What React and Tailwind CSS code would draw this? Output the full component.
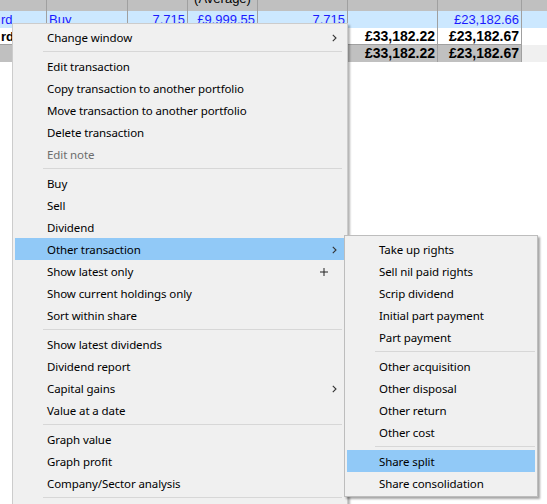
import React from "react";

const Chevron = () => (
  <svg width="5" height="8" viewBox="0 0 5 8" className="absolute right-[8px] top-[8px]">
    <path d="M0.8 0.8 L4 4 L0.8 7.2" fill="none" stroke="#333" strokeWidth="1.1" />
  </svg>
);

const Plus = () => (
  <svg width="8" height="8" viewBox="0 0 8 8" className="absolute right-[17px] top-[8px]">
    <path d="M4 0 V8 M0 4 H8" fill="none" stroke="#222" strokeWidth="1" />
  </svg>
);

function Item({ label, hl, disabled, sub, plus }) {
  return (
    <div
      className={
        "relative h-[22px] flex items-center pl-[32px] pt-[1px] whitespace-nowrap " +
        (hl ? "bg-[#91c9f7] " : "") +
        (disabled ? "text-[#6d6d6d]" : "text-black")
      }
    >
      {label}
      {sub && <Chevron />}
      {plus && <Plus />}
    </div>
  );
}

const Sep = ({ right }) => (
  <div className="h-[7px] flex items-center">
    <div className={"h-px bg-[#d7d7d7] ml-[28px] flex-1 " + (right ? "mr-[3px]" : "mr-0")} />
  </div>
);

export default function App() {
  const font = { fontFamily: '"Noto Sans", "Open Sans", sans-serif' };
  return (
    <div className="relative w-[547px] h-[504px] overflow-hidden bg-white" style={{ fontFamily: '"Liberation Sans", Arial, sans-serif' }}>
      {/* Background table */}
      <div className="flex flex-col text-[13px] leading-[17px]">
        {/* header */}
        <div className="flex h-[11px] bg-[#c0c0c0] overflow-hidden text-black">
          <div className="w-[47px] border-r border-[#a0a0a0]" />
          <div className="w-[81px] border-r border-[#a0a0a0]" />
          <div className="w-[60px] border-r border-[#a0a0a0]" />
          <div className="w-[70px] border-r border-[#a0a0a0] flex justify-center">
            <div className="-mt-[10px] leading-[17px]">(Average)</div>
          </div>
          <div className="w-[90px] border-r border-[#a0a0a0]" />
          <div className="w-[90px] border-r border-[#a0a0a0]" />
          <div className="w-[84px] border-r border-[#a0a0a0]" />
          <div className="flex-1" />
        </div>
        {/* selected row */}
        <div className="flex h-[17px] bg-[#cce8ff] text-[#1a1aff]">
          <div className="w-[47px] border-r border-[#a0a0a0] pl-[1px]">rd</div>
          <div className="w-[81px] border-r border-[#a0a0a0] pl-[2px]">Buy</div>
          <div className="w-[60px] border-r border-[#a0a0a0] text-right pr-[2px]">7,715</div>
          <div className="w-[70px] border-r border-[#a0a0a0] text-right pr-[2px]">£9,999.55</div>
          <div className="w-[90px] border-r border-[#a0a0a0] text-right pr-[2px]">7,715</div>
          <div className="w-[90px] border-r border-[#a0a0a0]" />
          <div className="w-[84px] border-r border-[#a0a0a0] text-right pr-[2px]">£23,182.66</div>
          <div className="flex-1" />
        </div>
        {/* total row white */}
        <div className="flex h-[17px] bg-white text-black font-bold">
          <div className="w-[47px] border-r border-b border-[#a0a0a0] pl-[1px]">rd</div>
          <div className="w-[81px] border-r border-b border-[#a0a0a0]" />
          <div className="w-[60px] border-r border-b border-[#a0a0a0]" />
          <div className="w-[70px] border-r border-b border-[#a0a0a0]" />
          <div className="w-[90px] border-r border-b border-[#a0a0a0]" />
          <div className="w-[90px] border-r border-b border-[#a0a0a0] text-right pr-[2px] text-[14px] leading-[16px]">£33,182.22</div>
          <div className="w-[84px] border-r border-b border-[#a0a0a0] text-right pr-[2px] text-[14px] leading-[16px]">£23,182.67</div>
          <div className="flex-1" />
        </div>
        {/* grand total gray */}
        <div className="flex h-[17px] bg-[#c0c0c0] text-black font-bold">
          <div className="w-[47px] border-r border-[#a0a0a0]" />
          <div className="w-[81px] border-r border-[#a0a0a0]" />
          <div className="w-[60px] border-r border-[#a0a0a0]" />
          <div className="w-[70px] border-r border-[#a0a0a0]" />
          <div className="w-[90px] border-r border-[#a0a0a0]" />
          <div className="w-[90px] border-r border-[#a0a0a0] text-right pr-[2px] text-[14px] leading-[17px]">£33,182.22</div>
          <div className="w-[84px] border-r border-[#a0a0a0] text-right pr-[2px] text-[14px] leading-[17px]">£23,182.67</div>
          <div className="flex-1 bg-[#f0f0f0]" />
        </div>
      </div>

      {/* Main context menu */}
      <div
        className="absolute left-[12px] top-[23px] w-[336px] bg-[#f0f0f0] border border-[#cccccc] shadow-[2px_2px_2px_rgba(0,0,0,0.3)] p-[2px] text-[11.5px] tracking-[-0.1px]"
        style={font}
      >
        <Item label="Change window" sub />
        <Sep right />
        <Item label="Edit transaction" />
        <Item label="Copy transaction to another portfolio" />
        <Item label="Move transaction to another portfolio" />
        <Item label="Delete transaction" />
        <Item label="Edit note" disabled />
        <Sep right />
        <Item label="Buy" />
        <Item label="Sell" />
        <Item label="Dividend" />
        <Item label="Other transaction" hl sub />
        <Item label="Show latest only" plus />
        <Item label="Show current holdings only" />
        <Item label="Sort within share" />
        <Sep right />
        <Item label="Show latest dividends" />
        <Item label="Dividend report" />
        <Item label="Capital gains" sub />
        <Item label="Value at a date" />
        <Sep right />
        <Item label="Graph value" />
        <Item label="Graph profit" />
        <Item label="Company/Sector analysis" />
        <Sep right />
        <div className="h-[22px]" />
      </div>

      {/* Submenu */}
      <div
        className="absolute left-[344px] top-[235px] w-[194px] bg-[#f0f0f0] border border-[#bdbdbd] shadow-[2px_2px_2px_rgba(0,0,0,0.35)] p-[2px] text-[11.5px] tracking-[-0.1px]"
        style={font}
      >
        <Item label="Take up rights" />
        <Item label="Sell nil paid rights" />
        <Item label="Scrip dividend" />
        <Item label="Initial part payment" />
        <Item label="Part payment" />
        <Sep />
        <Item label="Other acquisition" />
        <Item label="Other disposal" />
        <Item label="Other return" />
        <Item label="Other cost" />
        <Sep />
        <Item label="Share split" hl />
        <Item label="Share consolidation" />
      </div>
    </div>
  );
}
